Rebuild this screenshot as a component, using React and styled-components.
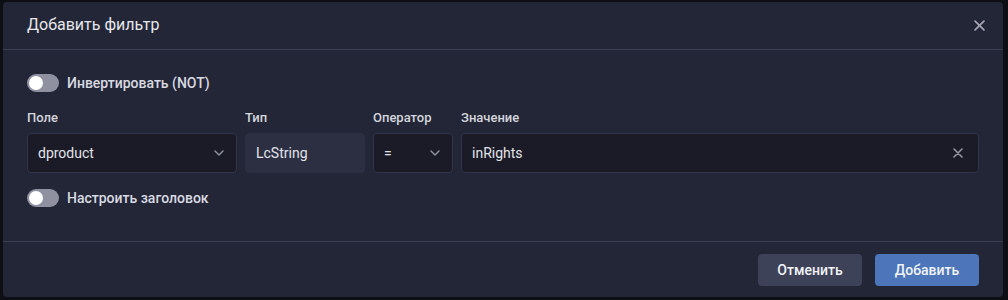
import React from "react";
import styled, { createGlobalStyle } from "styled-components";

const GlobalStyle = createGlobalStyle`
  html, body {
    margin: 0;
    padding: 0;
    background: #0e0f14;
    font-family: Roboto, "Liberation Sans", sans-serif;
  }
  * { box-sizing: border-box; }
`;

const Backdrop = styled.div`
  width: 1008px;
  height: 300px;
  padding: 2px 0 0 3px;
  overflow: hidden;
`;

const Dialog = styled.div`
  width: 1000px;
  height: 295px;
  background: #232636;
  border-radius: 4px;
  display: flex;
  flex-direction: column;
`;

const Header = styled.div`
  height: 48px;
  padding: 0 16px 0 24px;
  display: flex;
  align-items: center;
  justify-content: space-between;
  border-bottom: 1px solid #393c52;
`;

const Title = styled.h2`
  margin: 0 0 2px 0;
  font-size: 16px;
  font-weight: 400;
  color: #e6e7ec;
`;

const IconButton = styled.button`
  border: 0;
  background: transparent;
  padding: 0;
  width: 16px;
  height: 16px;
  display: flex;
  align-items: center;
  justify-content: center;
  color: ${(p) => p.$color || "#a3a5b3"};
  cursor: pointer;
`;

const Body = styled.div`
  flex: 1;
  padding: 24px 24px 0 24px;
  display: flex;
  flex-direction: column;
`;

const SwitchRow = styled.label`
  display: flex;
  align-items: center;
  gap: 8px;
  height: 18px;
  margin-bottom: ${(p) => p.$mb || 0}px;
  font-size: 14px;
  font-weight: 500;
  color: #d9dae2;
`;

const Track = styled.span`
  position: relative;
  width: 32px;
  height: 18px;
  border-radius: 9px;
  background: #8f91a0;
  flex-shrink: 0;
`;

const Knob = styled.span`
  position: absolute;
  left: 2px;
  top: 2px;
  width: 14px;
  height: 14px;
  border-radius: 50%;
  background: #ffffff;
`;

const FieldsRow = styled.div`
  display: flex;
  gap: 8px;
  margin-bottom: 16px;
`;

const Field = styled.div`
  display: flex;
  flex-direction: column;
  width: ${(p) => (p.$w ? `${p.$w}px` : "auto")};
  flex: ${(p) => (p.$w ? "0 0 auto" : "1")};
`;

const Label = styled.span`
  font-size: 13px;
  font-weight: 500;
  line-height: 16px;
  color: #d4d5dd;
  margin-bottom: 7px;
`;

const Control = styled.div`
  height: 40px;
  border-radius: 4px;
  display: flex;
  align-items: center;
  justify-content: space-between;
  padding: 0 12px 0 10px;
  font-size: 14px;
  color: #e2e3ea;
  background: ${(p) => (p.$readonly ? "#2c2f42" : "#1a1b26")};
  border: 1px solid ${(p) => (p.$readonly ? "#2c2f42" : "#31344a")};
`;

const Chevron = () => (
  <svg width="10" height="6" viewBox="0 0 10 6" fill="none">
    <path d="M1 1l4 4 4-4" stroke="#8d8f9e" strokeWidth="1.5" strokeLinecap="round" strokeLinejoin="round" />
  </svg>
);

const Cross = ({ size = 10 }) => (
  <svg width={size} height={size} viewBox="0 0 10 10" fill="none">
    <path d="M1 1l8 8M9 1l-8 8" stroke="currentColor" strokeWidth="1.6" strokeLinecap="round" />
  </svg>
);

const Footer = styled.div`
  height: 56px;
  border-top: 1px solid #393c52;
  padding: 0 24px;
  display: flex;
  align-items: center;
  justify-content: flex-end;
  gap: 13px;
`;

const Button = styled.button`
  height: 32px;
  width: 104px;
  border: 0;
  border-radius: 4px;
  font-family: Roboto, "Liberation Sans", sans-serif;
  font-size: 14px;
  font-weight: 500;
  color: #f2f3f7;
  background: ${(p) => (p.$primary ? "#4c76b9" : "#3e4259")};
  cursor: pointer;
`;

const Switch = ({ children, mb }) => (
  <SwitchRow $mb={mb}>
    <Track>
      <Knob />
    </Track>
    {children}
  </SwitchRow>
);

export default function App() {
  return (
    <>
      <GlobalStyle />
      <Backdrop>
        <Dialog>
          <Header>
            <Title>Добавить фильтр</Title>
            <IconButton aria-label="Закрыть">
              <Cross size={11} />
            </IconButton>
          </Header>
          <Body>
            <Switch mb={18}>Инвертировать (NOT)</Switch>
            <FieldsRow>
              <Field $w={210}>
                <Label>Поле</Label>
                <Control>
                  dproduct
                  <Chevron />
                </Control>
              </Field>
              <Field $w={120}>
                <Label>Тип</Label>
                <Control $readonly>LcString</Control>
              </Field>
              <Field $w={80}>
                <Label>Оператор</Label>
                <Control>
                  =
                  <Chevron />
                </Control>
              </Field>
              <Field>
                <Label>Значение</Label>
                <Control>
                  inRights
                  <IconButton $color="#9597a6" aria-label="Очистить">
                    <Cross />
                  </IconButton>
                </Control>
              </Field>
            </FieldsRow>
            <Switch mb={0}>Настроить заголовок</Switch>
          </Body>
          <Footer>
            <Button>Отменить</Button>
            <Button $primary>Добавить</Button>
          </Footer>
        </Dialog>
      </Backdrop>
    </>
  );
}
